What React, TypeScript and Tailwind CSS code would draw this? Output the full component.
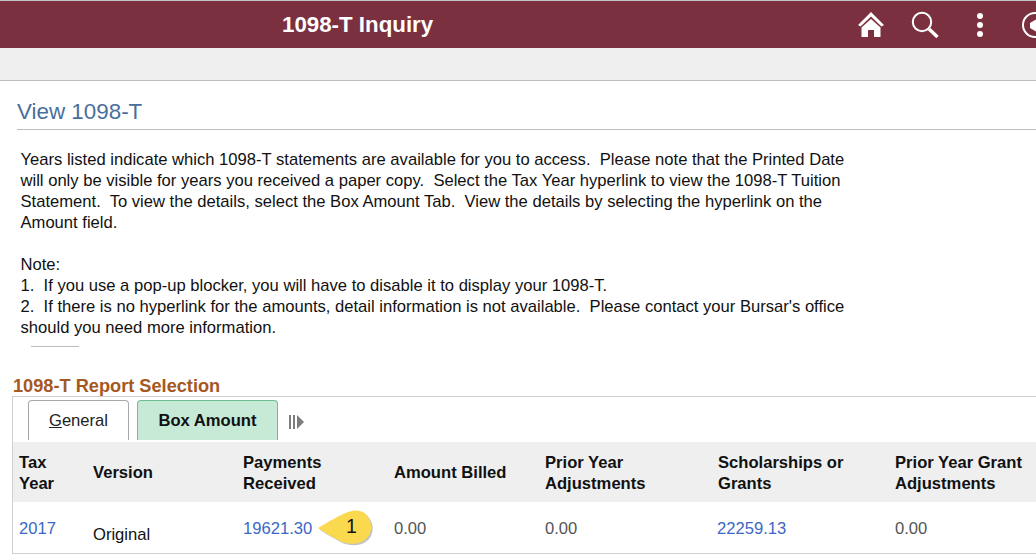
import React from 'react';

const columns = [
  { label: ['Tax', 'Year'], width: 'w-[74px]' },
  { label: ['Version'], width: 'w-[150px]' },
  { label: ['Payments', 'Received'], width: 'w-[151px]' },
  { label: ['Amount Billed'], width: 'w-[151px]' },
  { label: ['Prior Year', 'Adjustments'], width: 'w-[173px]' },
  { label: ['Scholarships or', 'Grants'], width: 'w-[177px]' },
  { label: ['Prior Year Grant', 'Adjustments'], width: 'w-[160px]' },
];

function HomeIcon() {
  return (
    <svg width="28" height="27" viewBox="0 0 28 27" fill="white">
      <path d="M14 1 L27 14 L24.5 15.5 L14 5.5 L3.5 15.5 L1 14 Z" />
      <path d="M14 8 L23.5 16.5 V26 H17 V19 H11 V26 H4.5 V16.5 Z" />
    </svg>
  );
}

function SearchIcon() {
  return (
    <svg width="28" height="28" viewBox="0 0 28 28" fill="none" stroke="white">
      <circle cx="11" cy="11" r="9.2" strokeWidth="2" />
      <path d="M18 18 L26.5 26" strokeWidth="3.4" />
    </svg>
  );
}

function DotsIcon() {
  return (
    <svg width="8" height="26" viewBox="0 0 8 26" fill="white">
      <circle cx="4" cy="4" r="3" />
      <circle cx="4" cy="13" r="3" />
      <circle cx="4" cy="22" r="3" />
    </svg>
  );
}

function NavIcon() {
  return (
    <svg width="28" height="28" viewBox="0 0 28 28" fill="none">
      <circle cx="14" cy="14" r="12" stroke="white" strokeWidth="2" />
      <path d="M9 12 L16 8 L21 14 L16 21 L9 17 Z" fill="white" />
    </svg>
  );
}

export default function App() {
  return (
    <div className="w-[1036px] h-[558px] overflow-hidden bg-white font-['Liberation_Sans',sans-serif] text-[16.6px] text-[#111]">
      <header className="h-[48px] border-t border-[#c4c4c4] bg-[#7a303f] relative flex items-center">
        <h1 className="ml-[282px] text-[22.3px] font-bold text-white">1098-T Inquiry</h1>
        <div className="ml-auto flex items-center mr-[-13px]">
          <HomeIcon />
          <span className="ml-[26px] flex"><SearchIcon /></span>
          <span className="ml-[37px] flex"><DotsIcon /></span>
          <span className="ml-[37px] flex"><NavIcon /></span>
        </div>
      </header>
      <div className="h-[33px] bg-[#efefef] border-b border-[#bdbdbd]" />

      <div className="ml-[17px] mt-[17px] h-[32px] border-b border-[#bdbdbd]">
        <h2 className="text-[22.4px] leading-[28px] text-[#4a6f9c]">View 1098-T</h2>
      </div>

      <div className="ml-[20.5px] mt-[19px] w-[860px] leading-[21px]">
        <p>
          Years listed indicate which 1098-T statements are available for you to access.&nbsp; Please note that the Printed Date<br />
          will only be visible for years you received a paper copy.&nbsp; Select the Tax Year hyperlink to view the 1098-T Tuition<br />
          Statement.&nbsp; To view the details, select the Box Amount Tab.&nbsp; View the details by selecting the hyperlink on the<br />
          Amount field.
        </p>
        <p className="mt-[21px]">
          Note:<br />
          1.&nbsp; If you use a pop-up blocker, you will have to disable it to display your 1098-T.<br />
          2.&nbsp; If there is no hyperlink for the amounts, detail information is not available.&nbsp; Please contact your Bursar's office<br />
          should you need more information.
        </p>
      </div>

      <div className="ml-[31px] mt-[8px] w-[48px] h-px bg-[#bdbdbd]" />

      <h3 className="ml-[13px] mt-[29px] text-[18.2px] leading-[20px] font-bold text-[#a5581f]">1098-T Report Selection</h3>

      <section className="ml-[12px] h-[158px] border border-[#d0d0d0] border-r-0">
        <div className="h-[45px] flex items-end pl-[15px] pb-[2px]">
          <div className="w-[101px] h-[40px] pt-[1px] flex items-center justify-center border border-b-0 border-[#a8a8a8] rounded-t-[4px] bg-white text-[#222]">
            <span><span className="underline">G</span>eneral</span>
          </div>
          <div className="ml-[8px] w-[141px] h-[40px] pt-[1px] flex items-center justify-center border border-b-0 border-[#6fbf94] rounded-t-[4px] bg-[#c6ead6] font-bold text-[#111]">
            Box Amount
          </div>
          <svg className="ml-[11px] mb-[11px]" width="16" height="14" viewBox="0 0 16 14" fill="#7d7d7d">
            <rect x="0" y="0" width="2" height="14" />
            <rect x="4" y="0" width="2" height="14" />
            <path d="M8 0 L15 7 L8 14 Z" />
          </svg>
        </div>

        <div className="h-[60px] bg-[#efefef] pl-[6px] flex items-center font-bold leading-[21px] text-[#111]">
          {columns.map((col) => (
            <div key={col.label[0]} className={`${col.width} shrink-0 ${col.label.length > 1 ? 'pt-[2px]' : ''}`}>
              {col.label.map((line) => (
                <div key={line} className="whitespace-nowrap">{line}</div>
              ))}
            </div>
          ))}
        </div>

        <div className="relative h-[51px] pl-[6px] flex text-[#555]">
          <div className="w-[74px] shrink-0 pt-[15px] text-[#3b68c4]">2017</div>
          <div className="w-[150px] shrink-0 pt-[21px] text-[#111]">Original</div>
          <div className="w-[151px] shrink-0 pt-[15px] text-[#3b68c4]">19621.30</div>
          <div className="w-[151px] shrink-0 pt-[15px]">0.00</div>
          <div className="w-[172px] shrink-0 pt-[15px]">0.00</div>
          <div className="w-[178px] shrink-0 pt-[15px] text-[#3b68c4]">22259.13</div>
          <div className="w-[160px] shrink-0 pt-[15px]">0.00</div>

          <div className="absolute left-[303px] top-[6px] w-[62px] h-[40px]">
            <svg width="62" height="40" viewBox="0 0 62 40">
              <path d="M2 20 C12 14 24 7 32 4 C40 1 48 2 52 9 C57 16 56 26 50 31 C43 37 32 37 24 33 C16 29 8 24 2 20 Z" fill="#8a8a8a" opacity="0.5" transform="translate(1.5 1.5)" />
              <path d="M2 20 C12 14 24 7 32 4 C40 1 48 2 52 9 C57 16 56 26 50 31 C43 37 32 37 24 33 C16 29 8 24 2 20 Z" fill="#fbd94f" />
            </svg>
            <span className="absolute left-[30px] top-[6px] text-[19.5px] leading-[24px] text-[#111]">1</span>
          </div>
        </div>
      </section>
    </div>
  );
}
